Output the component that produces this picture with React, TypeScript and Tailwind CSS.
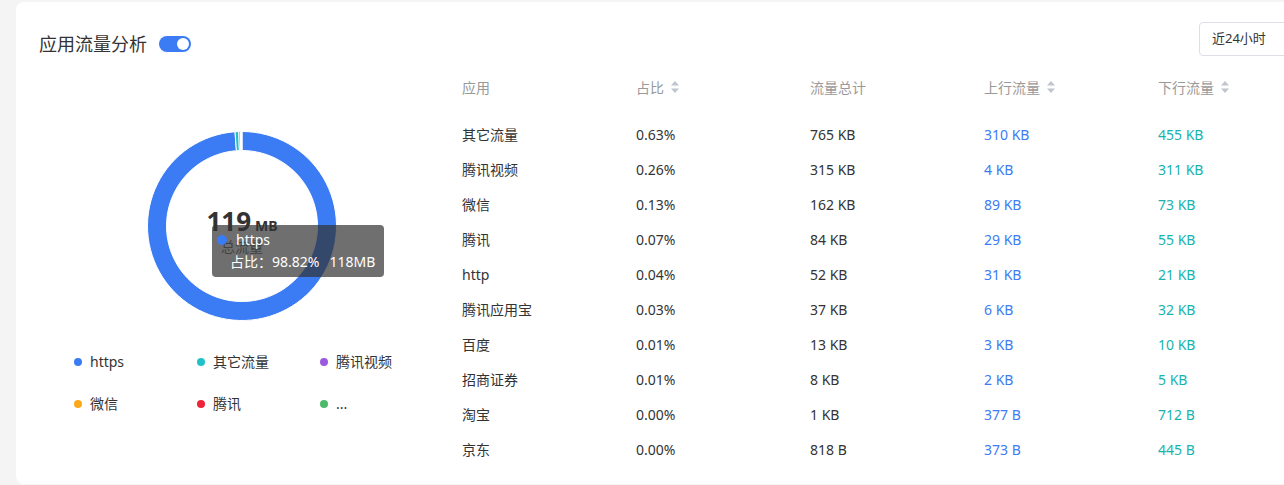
import React from "react";

const FONT = { fontFamily: '"Noto Sans", "Noto Sans CJK SC", sans-serif' };

const slices = [
  { v: 98.82, c: "#3b7cf4" },
  { v: 0.63, c: "#1fc2c8" },
  { v: 0.26, c: "#9b59e0" },
  { v: 0.13, c: "#fba81b" },
  { v: 0.07, c: "#ee2439" },
  { v: 0.09, c: "#4cba6a" },
];

function arcPath(cx: number, cy: number, r0: number, r1: number, a0: number, a1: number) {
  const p = (r: number, a: number) => [cx + r * Math.cos(a), cy + r * Math.sin(a)];
  const [x0, y0] = p(r1, a0);
  const [x1, y1] = p(r1, a1);
  const [x2, y2] = p(r0, a1);
  const [x3, y3] = p(r0, a0);
  const large = a1 - a0 > Math.PI ? 1 : 0;
  return `M${x0} ${y0} A${r1} ${r1} 0 ${large} 1 ${x1} ${y1} L${x2} ${y2} A${r0} ${r0} 0 ${large} 0 ${x3} ${y3} Z`;
}

function Donut() {
  const total = slices.reduce((s, d) => s + d.v, 0);
  let a = -Math.PI / 2;
  return (
    <svg width="190" height="190" viewBox="0 0 190 190">
      {slices.map((d, i) => {
        const a0 = a;
        const a1 = a + (d.v / total) * Math.PI * 2;
        a = a1;
        return (
          <path
            key={i}
            d={arcPath(95, 95, 75.5, 94.5, a0, a1)}
            fill={d.c}
            stroke="#ffffff"
            strokeWidth="1"
          />
        );
      })}
    </svg>
  );
}

function SortIcon() {
  return (
    <svg width="10" height="14" viewBox="0 0 10 14" className="ml-[6px]">
      <path d="M5 1 L9 5.5 L1 5.5 Z" fill="#c0c4cc" />
      <path d="M5 13 L9 8.5 L1 8.5 Z" fill="#c0c4cc" />
    </svg>
  );
}

const rows = [
  ["其它流量", "0.63%", "765 KB", "310 KB", "455 KB"],
  ["腾讯视频", "0.26%", "315 KB", "4 KB", "311 KB"],
  ["微信", "0.13%", "162 KB", "89 KB", "73 KB"],
  ["腾讯", "0.07%", "84 KB", "29 KB", "55 KB"],
  ["http", "0.04%", "52 KB", "31 KB", "21 KB"],
  ["腾讯应用宝", "0.03%", "37 KB", "6 KB", "32 KB"],
  ["百度", "0.01%", "13 KB", "3 KB", "10 KB"],
  ["招商证券", "0.01%", "8 KB", "2 KB", "5 KB"],
  ["淘宝", "0.00%", "1 KB", "377 B", "712 B"],
  ["京东", "0.00%", "818 B", "373 B", "445 B"],
];

const legend = [
  { label: "https", c: "#3b7cf4" },
  { label: "其它流量", c: "#1fc2c8" },
  { label: "腾讯视频", c: "#9b59e0" },
  { label: "微信", c: "#fba81b" },
  { label: "腾讯", c: "#ee2439" },
  { label: "...", c: "#4cba6a" },
];

export default function App() {
  return (
    <div className="w-[1284px] h-[485px] overflow-hidden bg-[#f4f4f5]" style={FONT}>
      <div className="ml-4 mt-[2px] h-[482px] w-[1280px] rounded-lg bg-white">
        <div className="flex h-[68px] items-start justify-between">
          <div className="ml-[23px] mt-[29px] flex h-[26px] items-center gap-3">
            <span className="text-[18px] leading-[26px] text-[#333333]">应用流量分析</span>
            <div className="flex h-4 w-8 items-center justify-end rounded-full bg-[#3b7cf4] pr-[2px]">
              <div className="h-3 w-3 rounded-full bg-white" />
            </div>
          </div>
          <div className="mt-5 flex h-[34px] w-[97px] items-center rounded border border-[#dcdfe6] bg-white pl-3 text-[13px] text-[#333333]">
            近24小时
          </div>
        </div>
        <div className="flex">
          <div className="w-[430px] shrink-0">
            <div className="relative ml-[131px] mt-[61px] h-[190px] w-[190px]">
              <Donut />
              <div className="absolute left-0 top-[75px] flex w-[190px] flex-col items-center">
                <div className="flex items-baseline text-[#333333]">
                  <span className="text-[26px] font-bold leading-[30px]">119</span>
                  <span className="ml-[4px] text-[14px] font-bold">MB</span>
                </div>
                <span className="mt-[2px] text-[14px] leading-[18px] text-[#666666]">总流量</span>
              </div>
              <div className="absolute left-[65px] top-[94px] h-[52px] w-[172px] rounded bg-[rgba(50,50,50,0.7)] text-[14px] text-white">
                <div className="ml-[5px] mt-[6px] flex h-[18px] items-center">
                  <span className="h-[10px] w-[10px] rounded-full bg-[#3b7cf4]" />
                  <span className="ml-[9px] leading-[18px]">https</span>
                </div>
                <div className="ml-[18px] mt-[4px] flex leading-[18px]">
                  <span>占比：98.82%</span>
                  <span className="ml-[10px]">118MB</span>
                </div>
              </div>
            </div>
            <div className="ml-[58px] mt-[32px] grid w-[369px] grid-cols-3 gap-y-[24px]">
              {legend.map((l) => (
                <div key={l.label} className="flex h-[18px] items-center">
                  <span className="h-[8px] w-[8px] rounded-full" style={{ backgroundColor: l.c }} />
                  <span className="ml-2 text-[14px] leading-[18px] text-[#333333]">{l.label}</span>
                </div>
              ))}
            </div>
          </div>
          <div className="shrink-0">
            <div className="grid h-[34px] grid-cols-[174px_174px_174px_174px_174px] items-center text-[14px] text-[#999999]">
              <div className="pl-4">应用</div>
              <div className="flex items-center pl-4">占比<SortIcon /></div>
              <div className="pl-4">流量总计</div>
              <div className="flex items-center pl-4">上行流量<SortIcon /></div>
              <div className="flex items-center pl-4">下行流量<SortIcon /></div>
            </div>
            <div className="mt-[13px]">
              {rows.map((r) => (
                <div
                  key={r[0]}
                  className="grid h-[35px] grid-cols-[174px_174px_174px_174px_174px] items-center text-[14px] text-[#333333]"
                >
                  <div className="pl-4">{r[0]}</div>
                  <div className="pl-4">{r[1]}</div>
                  <div className="pl-4">{r[2]}</div>
                  <div className="pl-4 text-[#3b7cf4]">{r[3]}</div>
                  <div className="pl-4 text-[#17b3ae]">{r[4]}</div>
                </div>
              ))}
            </div>
          </div>
        </div>
      </div>
    </div>
  );
}
